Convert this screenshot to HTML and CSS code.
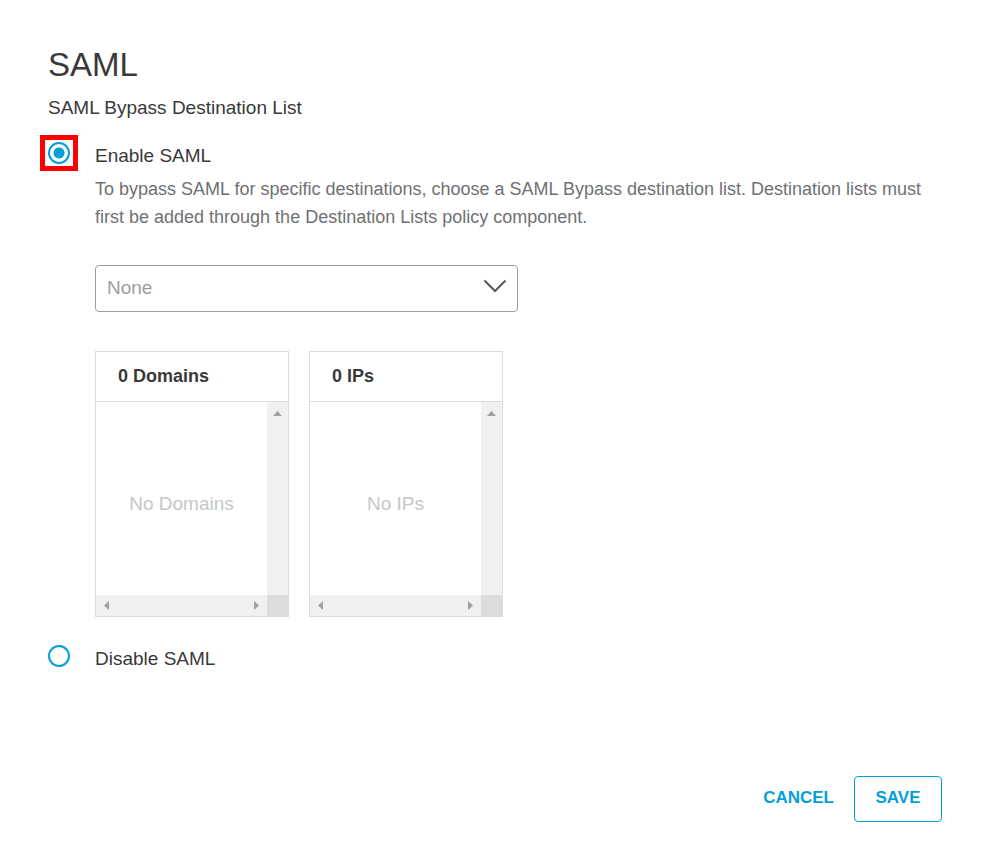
FILE: index.html
```html
<!DOCTYPE html>
<html lang="en">
<head>
<meta charset="utf-8">
<meta name="viewport" content="width=device-width, initial-scale=1">
<title>SAML</title>
<link rel="stylesheet" href="styles.css">
</head>
<body>
<form class="settings">
  <h1 class="title">SAML</h1>
  <p class="subtitle" id="subtitle">SAML Bypass Destination List</p>

  <div class="options" role="radiogroup" aria-labelledby="subtitle">
    <div class="option">
      <span class="radio-slot highlighted"><input class="radio" type="radio" name="saml" id="enable" checked></span>
      <div class="option-body">
        <label class="option-label" for="enable">Enable SAML</label>
        <p class="description" id="help">To bypass SAML for specific destinations, choose a SAML Bypass destination list. Destination lists must first be added through the Destination Lists policy component.</p>

        <div class="select-box">
          <select class="select" aria-label="SAML Bypass destination list" aria-describedby="help">
            <option>None</option>
          </select>
          <svg class="chevron" viewBox="0 0 24 14" aria-hidden="true"><path d="M1.500 1.500 12 12 22.500 1.500"/></svg>
        </div>

        <div class="panels">
          <section class="panel">
            <h2 class="panel-title">0 Domains</h2>
            <div class="panel-body">
              <p class="empty">No Domains</p>
              <div class="track vertical"><svg class="arrow up" viewBox="0 0 9 5" aria-hidden="true"><path d="M0 5 4.500 0 9 5Z"/></svg></div>
              <div class="track horizontal">
                <svg class="arrow side" viewBox="0 0 5 9" aria-hidden="true"><path d="M5 0 0 4.500 5 9Z"/></svg>
                <svg class="arrow side" viewBox="0 0 5 9" aria-hidden="true"><path d="M0 0 5 4.500 0 9Z"/></svg>
              </div>
              <div class="corner"></div>
            </div>
          </section>
          <section class="panel">
            <h2 class="panel-title">0 IPs</h2>
            <div class="panel-body">
              <p class="empty">No IPs</p>
              <div class="track vertical"><svg class="arrow up" viewBox="0 0 9 5" aria-hidden="true"><path d="M0 5 4.500 0 9 5Z"/></svg></div>
              <div class="track horizontal">
                <svg class="arrow side" viewBox="0 0 5 9" aria-hidden="true"><path d="M5 0 0 4.500 5 9Z"/></svg>
                <svg class="arrow side" viewBox="0 0 5 9" aria-hidden="true"><path d="M0 0 5 4.500 0 9Z"/></svg>
              </div>
              <div class="corner"></div>
            </div>
          </section>
        </div>
      </div>
    </div>

    <div class="option">
      <span class="radio-slot"><input class="radio" type="radio" name="saml" id="disable"></span>
      <div class="option-body">
        <label class="option-label" for="disable">Disable SAML</label>
      </div>
    </div>
  </div>

  <div class="actions">
    <button class="button" type="reset">CANCEL</button>
    <button class="button outlined" type="submit">SAVE</button>
  </div>
</form>
</body>
</html>
```
FILE: styles.css
```css
* {
  box-sizing: border-box;
}

body {
  margin: 0;
  background: #fff;
  color: #393939;
  font: 19px/24px "Liberation Sans", Arial, sans-serif;
}

h1, h2, p {
  margin: 0;
}

.settings {
  padding: 45px 48px 40px;
}

.title {
  font-size: 33px;
  line-height: 40px;
  font-weight: 400;
}

.subtitle {
  margin-top: 11px;
}

.options {
  display: flex;
  flex-direction: column;
  gap: 28px;
  margin-top: 22px;
}

.option {
  display: grid;
  grid-template-columns: 22px minmax(0, 1fr);
  column-gap: 25px;
  align-items: start;
}

.radio-slot {
  position: relative;
  display: flex;
}

.highlighted::after {
  content: "";
  position: absolute;
  inset: -7px -8px;
  border: 5px solid #f00;
  pointer-events: none;
}

.radio {
  appearance: none;
  width: 22px;
  height: 22px;
  margin: 0;
  border: 2px solid #049fd9;
  border-radius: 50%;
  background: #fff;
}

.radio:checked {
  background: radial-gradient(circle, #049fd9 5px, #fff 6px);
}

.option-body {
  padding-top: 2px;
}

.option-label {
  display: block;
}

.description {
  max-width: 840px;
  margin-top: 7px;
  color: #6f7073;
  font-size: 18px;
  line-height: 28px;
}

.select-box {
  position: relative;
  max-width: 423px;
  margin-top: 34px;
}

.select {
  appearance: none;
  display: block;
  width: 100%;
  height: 47px;
  padding: 0 48px 2px 11px;
  border: 1px solid #9e9e9e;
  border-radius: 4px;
  background: #fff;
  color: #9e9e9e;
  font: inherit;
}

.chevron {
  position: absolute;
  top: 14px;
  right: 11px;
  width: 24px;
  height: 14px;
  fill: none;
  stroke: #58585b;
  stroke-width: 2;
  pointer-events: none;
}

.panels {
  display: flex;
  flex-wrap: wrap;
  gap: 20px;
  margin-top: 39px;
}

.panel {
  width: 194px;
  border: 1px solid #dcdcdc;
}

.panel-title {
  padding: 12px 22px 13px;
  border-bottom: 1px solid #dcdcdc;
  font-size: 18px;
  line-height: 24px;
}

.panel-body {
  display: grid;
  grid-template: 193px 21px / minmax(0, 1fr) 21px;
}

.empty {
  align-self: center;
  padding-top: 10px;
  color: #c4c7cb;
  text-align: center;
}

.track {
  display: flex;
  background: #f0f0f0;
}

.vertical {
  justify-content: center;
  padding-top: 9px;
}

.horizontal {
  align-items: center;
  justify-content: space-between;
  padding: 0 8px;
}

.corner {
  background: #dcdcdc;
}

.arrow {
  fill: #a0a0a0;
}

.up {
  width: 9px;
  height: 5px;
}

.side {
  width: 5px;
  height: 9px;
}

.actions {
  display: flex;
  justify-content: flex-end;
  gap: 20px;
  margin-top: 105px;
}

.button {
  height: 46px;
  padding: 0 0 2px;
  border: 0;
  border-radius: 4px;
  background: none;
  color: #049fd9;
  font: 700 17px/24px "Liberation Sans", Arial, sans-serif;
}

.outlined {
  min-width: 88px;
  border: 1px solid #049fd9;
}
```
